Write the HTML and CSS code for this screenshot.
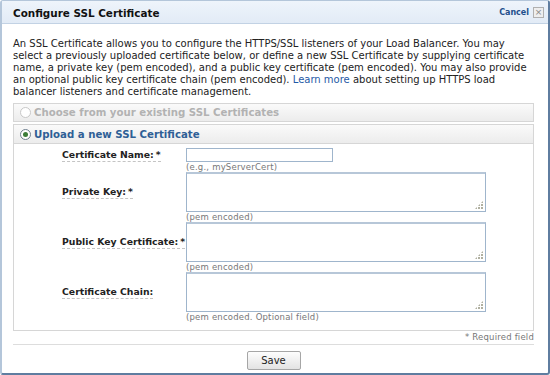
FILE: index.html
```html
<!DOCTYPE html>
<html lang="en">
<head>
    <meta charset="UTF-8">
    <title>Configure SSL Certificate</title>
    <link rel="stylesheet" href="styles.css">
</head>
<body>
    <div class="dialog">
        <div class="dialog-header">
            <h2>Configure SSL Certificate</h2>
            <div class="header-actions">
                <a href="#" class="cancel">Cancel</a>
                <span class="close-btn">&#215;</span>
            </div>
        </div>
        <div class="dialog-body">
            <p class="intro">
                An SSL Certificate allows you to configure the HTTPS/SSL listeners of your Load Balancer. You may<br>
                select a previously uploaded certificate below, or define a new SSL Certificate by supplying certificate<br>
                name, a private key (pem encoded), and a public key certificate (pem encoded). You may also provide<br>
                an optional public key certificate chain (pem encoded). <a href="#">Learn more</a> about setting up HTTPS load<br>
                balancer listeners and certificate management.
            </p>

            <div class="option disabled">
                <span class="radio"></span>
                <span class="option-title">Choose from your existing SSL Certificates</span>
            </div>

            <div class="option selected">
                <span class="radio checked"></span>
                <span class="option-title">Upload a new SSL Certificate</span>
            </div>
            <div class="option-content">
                <div class="form-grid">
                    <div class="field-label short"><span>Certificate Name:<i>*</i></span></div>
                    <div class="field">
                        <input type="text" class="text-input">
                        <div class="hint">(e.g., myServerCert)</div>
                    </div>

                    <div class="field-label"><span>Private Key:<i>*</i></span></div>
                    <div class="field">
                        <div class="area-wrap"><textarea></textarea></div>
                        <div class="hint">(pem encoded)</div>
                    </div>

                    <div class="field-label"><span>Public Key Certificate:<i>*</i></span></div>
                    <div class="field">
                        <div class="area-wrap"><textarea></textarea></div>
                        <div class="hint">(pem encoded)</div>
                    </div>

                    <div class="field-label"><span>Certificate Chain:</span></div>
                    <div class="field">
                        <div class="area-wrap"><textarea></textarea></div>
                        <div class="hint">(pem encoded. Optional field)</div>
                    </div>
                </div>
            </div>
            <div class="required-note">* Required field</div>
            <div class="actions">
                <button class="save-btn">Save</button>
            </div>
        </div>
    </div>
</body>
</html>
```

FILE: styles.css
```css
body {
    margin: 0;
    font-family: Verdana, "DejaVu Sans", sans-serif;
    font-size: 10px;
    color: #222;
    background: #fff;
}
.dialog {
    width: 550px;
    height: 375px;
    box-sizing: border-box;
    border-left: 2px solid #b4c6da;
    border-right: 2px solid #5f7da0;
    border-bottom: 2px solid #5f7da0;
    border-top: 1px solid #b4c6da;
    border-radius: 3px;
    overflow: hidden;
}
.dialog-header {
    height: 23px;
    box-sizing: border-box;
    display: flex;
    justify-content: space-between;
    align-items: center;
    padding: 1px 4px 0 11px;
    background: linear-gradient(#eef4fb, #e2ebf6);
    border-bottom: 1px solid #c2d2e4;
}
.dialog-header h2 {
    margin: 0;
    font-size: 10.4px;
    font-weight: bold;
    color: #111;
}
.header-actions {
    display: flex;
    align-items: center;
    gap: 4px;
}
.cancel {
    font-size: 8px;
    font-weight: bold;
    color: #234f8c;
    text-decoration: none;
}
.close-btn {
    width: 9px;
    height: 9px;
    border: 1px solid #b0b0b0;
    background: #eee;
    color: #888;
    font-size: 9px;
    line-height: 8px;
    text-align: center;
}
.dialog-body {
    padding: 14px 14px 0 11px;
}
.intro {
    margin: 0 0 5px;
    line-height: 12px;
    color: #222;
    white-space: nowrap;
}
.intro a {
    color: #1f5aa6;
    text-decoration: none;
}
.option {
    height: 19px;
    box-sizing: border-box;
    display: flex;
    align-items: center;
    gap: 3px;
    padding-left: 6px;
    border: 1px solid #d6d6d6;
    background: linear-gradient(#fafafa, #ececec);
    font-weight: bold;
    font-size: 10.2px;
}
.option.disabled {
    color: #b2b2b2;
    margin-bottom: 2px;
}
.option.selected {
    color: #2f5f96;
    height: 20px;
}
.radio {
    width: 9px;
    height: 9px;
    border: 1px solid #c8c8c8;
    border-radius: 50%;
    background: #fff;
    box-sizing: content-box;
    display: flex;
    align-items: center;
    justify-content: center;
}
.radio.checked {
    border-color: #6f7f8f;
}
.radio.checked::after {
    content: "";
    width: 5px;
    height: 5px;
    border-radius: 50%;
    background: #3d7d3a;
}
.option-content {
    border: 1px solid #d6d6d6;
    border-top: none;
    padding: 4px 0 8px 48px;
}
.form-grid {
    display: grid;
    grid-template-columns: 124px 300px;
}
.field-label {
    display: flex;
    align-items: center;
    height: 40px;
    font-weight: bold;
    font-size: 9.3px;
}
.field-label.short {
    height: 14px;
}
.field-label span {
    border-bottom: 1px dashed #c4c4c4;
    line-height: 12px;
}
.field-label i {
    font-style: normal;
    margin-left: 2px;
}
.text-input {
    display: block;
    width: 147px;
    height: 14px;
    box-sizing: border-box;
    margin: 0;
    padding: 0 2px;
    border: 1px solid #9fb5cc;
    font: inherit;
}
.hint {
    font-size: 8.5px;
    color: #777;
    height: 10px;
    line-height: 10px;
    letter-spacing: 0.2px;
}
.area-wrap {
    position: relative;
    height: 40px;
}
.area-wrap::after {
    content: "";
    position: absolute;
    right: 3px;
    bottom: 3px;
    width: 8px;
    height: 8px;
    background: conic-gradient(from 90deg at 2px 2px, transparent 0 50%, #b0b0a0 50% 75%, transparent 75%) 0 0 / 3px 3px;
    clip-path: polygon(100% 0, 100% 100%, 0 100%);
}
textarea {
    display: block;
    width: 300px;
    height: 40px;
    box-sizing: border-box;
    margin: 0;
    padding: 2px;
    border: 1px solid #9fb5cc;
    border-top: 2px solid #b7c7d8;
    resize: none;
    font: inherit;
}
.required-note {
    text-align: right;
    font-size: 8.5px;
    color: #777;
    padding: 1px 0 2px;
    border-bottom: 1px solid #ddd;
    letter-spacing: 0.2px;
}
.actions {
    display: flex;
    justify-content: center;
    padding-top: 6px;
}
.save-btn {
    width: 54px;
    height: 19px;
    padding: 0;
    border: 1px solid #a6a6a6;
    border-radius: 2px;
    background: linear-gradient(#fdfdfd, #e3e3e3);
    font: inherit;
    color: #222;
}
```
